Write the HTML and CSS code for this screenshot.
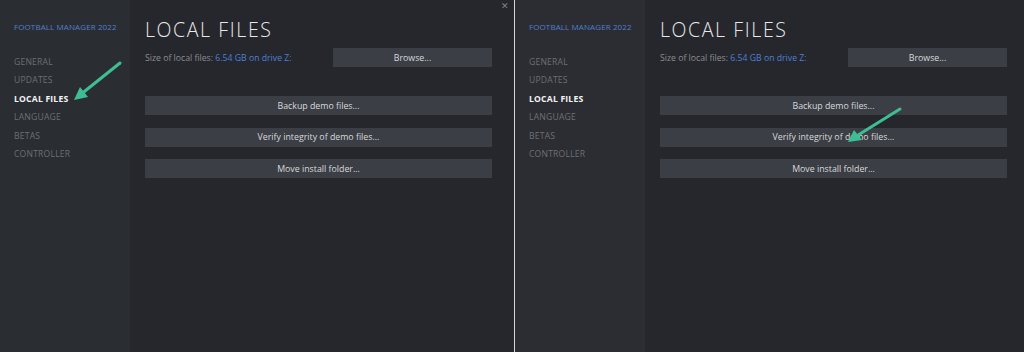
FILE: index.html
```html
<!DOCTYPE html>
<html>
<head>
<meta charset="utf-8">
<link rel="stylesheet" href="styles.css">
</head>
<body>
<div class="shot">
  <div class="panel panel-left">
    <aside class="sidebar">
      <div class="game">FOOTBALL MANAGER 2022</div>
      <nav class="nav">
        <div class="nav-item">GENERAL</div>
        <div class="nav-item">UPDATES</div>
        <div class="nav-item active">LOCAL FILES</div>
        <div class="nav-item">LANGUAGE</div>
        <div class="nav-item">BETAS</div>
        <div class="nav-item">CONTROLLER</div>
      </nav>
    </aside>
    <main class="content">
      <h1 class="title">LOCAL FILES</h1>
      <div class="size-row">
        <div class="size">Size of local files: <span class="link">6.54 GB on drive Z:</span></div>
        <div class="btn browse">Browse...</div>
      </div>
      <div class="actions">
        <div class="btn">Backup demo files...</div>
        <div class="btn">Verify integrity of demo files...</div>
        <div class="btn">Move install folder...</div>
      </div>
    </main>
    <div class="close">&#x2715;</div>
    <svg class="arrow arrow-left" width="60" height="50" viewBox="0 0 60 50">
      <line x1="48" y1="4" x2="8" y2="36" stroke="#3dbf93" stroke-width="3" stroke-linecap="round"/>
      <polygon points="2,41 8,28 16,38" fill="#3dbf93"/>
    </svg>
  </div>
  <div class="divider"></div>
  <div class="panel panel-right">
    <aside class="sidebar">
      <div class="game">FOOTBALL MANAGER 2022</div>
      <nav class="nav">
        <div class="nav-item">GENERAL</div>
        <div class="nav-item">UPDATES</div>
        <div class="nav-item active">LOCAL FILES</div>
        <div class="nav-item">LANGUAGE</div>
        <div class="nav-item">BETAS</div>
        <div class="nav-item">CONTROLLER</div>
      </nav>
    </aside>
    <main class="content">
      <h1 class="title">LOCAL FILES</h1>
      <div class="size-row">
        <div class="size">Size of local files: <span class="link">6.54 GB on drive Z:</span></div>
        <div class="btn browse">Browse...</div>
      </div>
      <div class="actions">
        <div class="btn">Backup demo files...</div>
        <div class="btn">Verify integrity of demo files...</div>
        <div class="btn">Move install folder...</div>
      </div>
    </main>
    <svg class="arrow arrow-right" width="64" height="44" viewBox="0 0 64 44">
      <line x1="57" y1="5" x2="12" y2="33" stroke="#3dbf93" stroke-width="3" stroke-linecap="round"/>
      <polygon points="5,38 11,26 19,36" fill="#3dbf93"/>
    </svg>
  </div>
</div>
</body>
</html>
```
FILE: styles.css
```css
html, body {
  margin: 0;
  padding: 0;
  background: #25272c;
}
.shot {
  display: flex;
  width: 1024px;
  height: 352px;
  overflow: hidden;
  font-family: "Open Sans", "Noto Sans", sans-serif;
}
.panel {
  position: relative;
  display: flex;
  height: 352px;
}
.panel-left { width: 514px; }
.panel-right { flex: 1; }
.divider {
  width: 1px;
  background: #d6d7d9;
}
.panel-left .sidebar { background: #2a2e32; }
.panel-right .sidebar { background: #2c2d32; }
.sidebar {
  width: 130px;
  flex-shrink: 0;
  padding: 21px 0 0 14px;
  box-sizing: border-box;
}
.game {
  font-size: 8px;
  color: #4f7fd0;
  line-height: 12px;
  letter-spacing: 0.1px;
}
.nav {
  margin-top: 20px;
  display: flex;
  flex-direction: column;
}
.nav-item {
  font-size: 8.6px;
  line-height: 18.4px;
  color: #6c6f74;
  letter-spacing: 0.2px;
}
.nav-item.active {
  color: #f2f3f4;
  font-weight: 700;
}
.content {
  flex: 1;
  padding: 0 0 0 15px;
}
.title {
  margin: 17px 0 0 0;
  font-size: 19.5px;
  font-weight: 300;
  letter-spacing: 1.6px;
  color: #e8e9ea;
  line-height: 26px;
}
.size-row {
  width: 347px;
  display: flex;
  align-items: center;
  justify-content: space-between;
  margin-top: 5px;
}
.size {
  font-size: 8.7px;
  color: #8a8d92;
}
.link { color: #4c7fd6; }
.btn {
  background: #3b3e45;
  color: #d8d9db;
  font-size: 8.8px;
  height: 19px;
  display: flex;
  align-items: center;
  justify-content: center;
}
.browse { width: 159px; }
.actions {
  margin-top: 29px;
  width: 347px;
  display: flex;
  flex-direction: column;
  gap: 12.5px;
}
.close {
  position: absolute;
  top: -1px;
  right: 5px;
  font-size: 9px;
  color: #80838a;
}
.arrow { position: absolute; }
.arrow-left { left: 72px; top: 59px; }
.arrow-right { left: 328px; top: 104px; }
```
